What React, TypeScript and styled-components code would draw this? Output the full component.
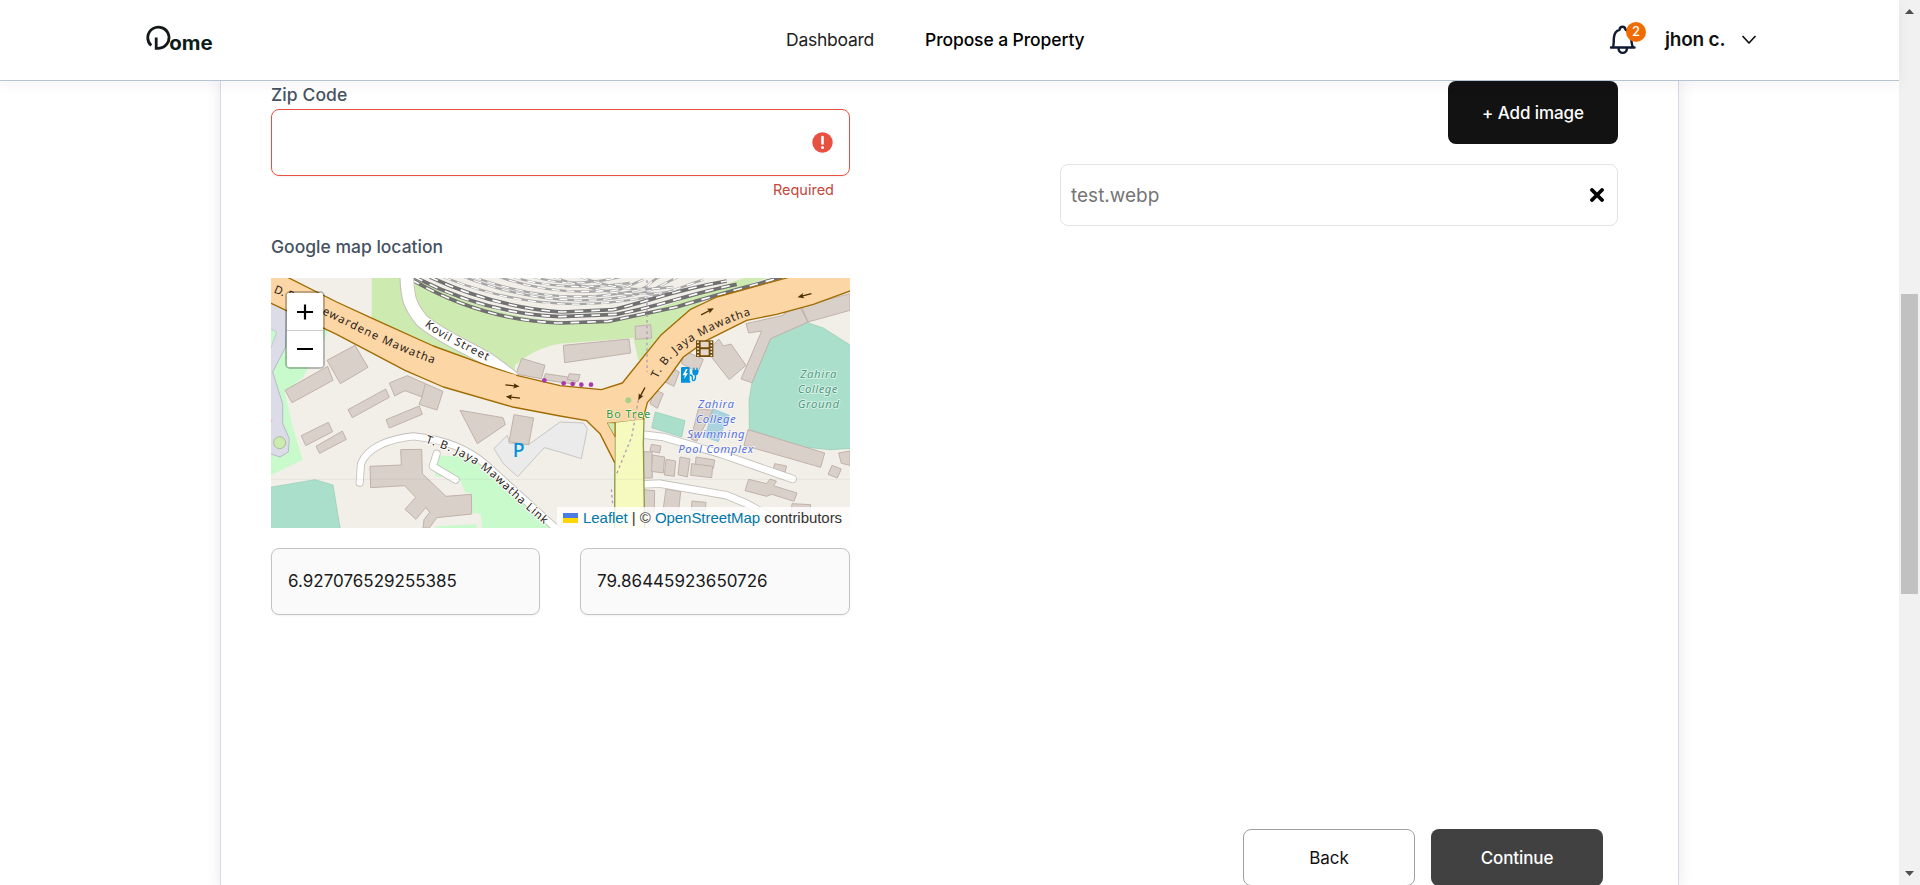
import React from "react";
import styled, { createGlobalStyle } from "styled-components";

const Global = createGlobalStyle`
  * { box-sizing: border-box; }
  html, body { margin: 0; padding: 0; background: #fff; overflow: hidden; }
  body { font-family: Inter, "Liberation Sans", sans-serif; color: #111; }
  button, input { font: inherit; margin: 0; }
`;

const Screen = styled.div`
  display: flex;
  width: 1920px;
  height: 885px;
  overflow: hidden;
`;
const Page = styled.div`
  width: 1899px;
  height: 885px;
  display: flex;
  flex-direction: column;
`;
const Header = styled.header`
  position: relative;
  z-index: 2;
  flex: none;
  height: 81px;
  background: #fff;
  border-bottom: 1px solid #b6c3d2;
  box-shadow: 0 3px 14px rgba(30, 40, 60, 0.06);
  display: grid;
  grid-template-columns: 786px 1fr auto;
  align-items: center;
  padding-right: 143px;
`;
const Logo = styled.svg`
  display: block;
  margin-left: 146px;
  margin-top: -3px;
`;
const Nav = styled.nav`
  display: flex;
  gap: 50px;
`;
const NavLink = styled.a<{ $active?: boolean; $w: number; $ls: number }>`
  width: ${(p) => p.$w}px;
  white-space: nowrap;
  font-size: 17.5px;
  line-height: 24px;
  letter-spacing: ${(p) => p.$ls}px;
  font-weight: ${(p) => (p.$active ? 500 : 400)};
  color: ${(p) => (p.$active ? "#000" : "#222")};
`;
const Account = styled.div`
  display: flex;
  align-items: center;
`;
const BellBox = styled.div`
  position: relative;
  width: 28px;
  height: 30px;
  margin-right: 28px;
`;
const Badge = styled.span`
  position: absolute;
  left: 17px;
  top: -3px;
  width: 20px;
  height: 20px;
  border-radius: 50%;
  background: #f06c00;
  color: #fff;
  font-size: 13px;
  font-weight: 500;
  line-height: 19px;
  text-align: center;
`;
const UserName = styled.span`
  width: 77px;
  font-size: 19px;
  font-weight: 600;
  line-height: 24px;
  letter-spacing: -0.2px;
  white-space: nowrap;
`;
const Card = styled.main`
  flex: 1;
  width: 1459px;
  margin-left: 220px;
  border: solid #d9d9e6;
  border-width: 0 1px;
  box-shadow: 0 0 14px rgba(60, 60, 110, 0.12);
  display: flex;
  flex-direction: column;
  padding: 0 60px 0 50px;
`;
const Columns = styled.div`
  display: flex;
  justify-content: space-between;
  height: 748px;
`;
const FormColumn = styled.section`
  width: 579px;
  display: flex;
  flex-direction: column;
`;
const Label = styled.label<{ $ls: number }>`
  font-size: 17.5px;
  font-weight: 500;
  line-height: 28px;
  letter-spacing: ${(p) => p.$ls}px;
  color: #46525f;
`;
const ZipField = styled.div`
  height: 67px;
  border: 1px solid #e85141;
  border-radius: 8px;
  display: flex;
  align-items: center;
  justify-content: flex-end;
  padding-right: 16px;
  box-shadow: 0 1px 2px rgba(0, 0, 0, 0.05);
`;
const ErrorText = styled.p`
  margin: 3px 16px 32px 0;
  height: 22px;
  text-align: right;
  font-size: 14.5px;
  line-height: 22px;
  color: #c4463b;
`;
const MapFrame = styled.div`
  position: relative;
  height: 250px;
  margin: 17px 0 20px;
  overflow: hidden;
  background: #f2efe9;
`;
const MapDrawing = styled.svg`
  display: block;
  width: 579px;
  height: 250px;
  font-family: "Noto Sans", sans-serif;
`;
const ZoomControl = styled.div`
  position: absolute;
  left: 14px;
  top: 13px;
  width: 40px;
  height: 78px;
  border: 2px solid rgba(0, 0, 0, 0.24);
  border-radius: 5px;
  background-clip: padding-box;
`;
const ZoomButton = styled.button`
  display: flex;
  align-items: center;
  justify-content: center;
  width: 36px;
  height: 37px;
  padding: 0;
  border: 0;
  background: #fff;
  &:first-child { border-bottom: 1px solid #ccc; height: 38px; border-radius: 2px 2px 0 0; }
  &:last-child { border-radius: 0 0 2px 2px; height: 36px; }
`;
const Attribution = styled.div`
  position: absolute;
  right: 0;
  bottom: 0;
  height: 21px;
  width: 293px;
  padding-left: 6px;
  display: flex;
  align-items: center;
  background: rgba(255, 255, 255, 0.82);
  font: 15px/21px "Liberation Sans", Arial, sans-serif;
  letter-spacing: -0.05px;
  color: #333;
  white-space: pre;
  svg { margin-right: 5px; }
  a { color: #0078a8; }
`;
const Coordinates = styled.div`
  display: grid;
  grid-template-columns: 269px 270px;
  gap: 40px;
`;
const CoordinateInput = styled.div`
  height: 67px;
  padding: 0 16px;
  border: 1px solid #c4c4c6;
  border-radius: 8px;
  background: #fafafa;
  box-shadow: 0 1px 2px rgba(0, 0, 0, 0.06);
  font-size: 17px;
  line-height: 65px;
  color: #1a1a1a;
`;
const ImageColumn = styled.section`
  width: 558px;
  display: flex;
  flex-direction: column;
  align-items: flex-end;
`;
const Button = styled.button<{ $kind: "black" | "outline" | "dark" }>`
  width: ${(p) => (p.$kind === "black" ? 170 : 172)}px;
  height: ${(p) => (p.$kind === "black" ? 63 : 57)}px;
  padding: 0;
  border: ${(p) => (p.$kind === "outline" ? "1px solid #a0a0a0" : "0")};
  border-radius: 8px;
  background: ${(p) => ({ black: "#121212", outline: "#fff", dark: "#414141" })[p.$kind]};
  color: ${(p) => (p.$kind === "outline" ? "#111" : "#fff")};
  font-size: 17px;
  font-weight: ${(p) => (p.$kind === "outline" ? 400 : 500)};
  letter-spacing: -0.1px;
`;
const FileRow = styled.div`
  width: 558px;
  height: 62px;
  margin-top: 20px;
  padding: 0 13px 0 10px;
  border: 1px solid #e3e3e8;
  border-radius: 8px;
  display: flex;
  align-items: center;
  justify-content: space-between;
  font-size: 19px;
  color: #757575;
`;
const Footer = styled.footer`
  display: flex;
  justify-content: flex-end;
  gap: 16px;
  padding-right: 15px;
`;
const Scrollbar = styled.aside`
  width: 21px;
  height: 885px;
  background: #f1f1f1;
  display: flex;
  flex-direction: column;
  align-items: center;
  justify-content: space-between;
  padding: 9px 0 9px;
`;
const Thumb = styled.div`
  width: 17px;
  height: 300px;
  margin-top: 2px;
  background: #c1c1c1;
`;

const buildings = [
  "171,250 255,205 294,271 211,320",
  "45,340 173,268 189,310 66,377",
  "358,318 412,296 466,320 519,343 501,399 447,382 456,360 405,341 374,357",
  "234,398 347,336 358,361 247,422",
  "348,428 448,387 457,412 358,453",
  "94,476 175,436 188,464 107,506",
  "138,508 217,462 229,487 149,529",
  "570,400 699,422 706,443 622,500",
  "732,413 791,423 776,503 717,494",
  "392,518 455,517 457,590 528,658 604,652 605,711 500,722 478,753 459,753 462,728 479,706 468,691 438,727 405,697 437,661 404,626 302,632 300,568 394,564",
  "755,244 825,265 814,305 738,291",
  "826,290 880,298 920,305 915,322 820,308",
  "880,205 1077,186 1082,228 884,257",
  "1095,148 1142,143 1145,183 1097,187",
  "898,290 930,293 924,314 892,307",
  "1240,220 1300,247 1284,286 1235,260",
  "1205,272 1228,285 1212,328 1185,315",
  "1155,338 1180,350 1162,394 1140,380",
  "1312,224 1346,186 1360,207 1383,201 1428,265 1378,308",
  "1428,140 1540,115 1548,100 1595,88 1740,50 1740,100 1614,135 1502,185 1446,317 1413,306 1475,162 1436,168",
  "1434,458 1664,528 1652,571 1422,505",
  "1706,528 1740,522 1740,565 1714,559",
  "1686,565 1714,576 1702,603 1674,592",
  "1436,607 1490,620 1500,606 1520,613 1510,626 1581,648 1572,673 1505,652 1490,658 1425,641",
  "1514,560 1550,567 1545,585 1510,576",
  "1285,395 1328,400 1280,493 1263,486",
  "1144,502 1173,507 1169,528 1140,522",
  "1122,524 1146,525 1147,603 1118,603",
  "1148,534 1184,540 1180,588 1144,583",
  "1188,547 1217,552 1213,598 1183,594",
  "1230,540 1260,546 1252,600 1224,593",
  "1278,540 1334,549 1330,574 1276,566",
  "1265,560 1328,568 1325,602 1262,595",
  "1120,638 1154,641 1153,705 1120,705",
  "1188,636 1232,644 1225,710 1178,707",
  "1266,672 1308,676 1306,700 1264,700",
  "1566,680 1622,683 1618,710 1563,708",
];

const rails = [
  "M425 8 C540 75 690 132 870 138 L1015 133 L1220 90 C1330 56 1450 25 1535 0",
  "M434 0 C560 65 700 112 870 119 L1040 112 C1160 90 1260 50 1400 22",
  "M480 0 C600 56 730 95 875 105 L1030 98 C1130 75 1210 40 1370 12",
];
const sidings = [
  "M520 0 C690 68 850 94 1020 76 S1200 40 1300 8",
  "M570 -5 C720 55 870 80 1010 66 S1160 28 1225 0",
  "M610 0 C760 54 890 70 1030 52 S1120 18 1170 0",
  "M675 -5 C790 38 920 54 1050 38 L1120 8",
  "M730 0 C820 30 950 38 1080 18",
  "M790 0 C870 22 950 24 1050 0",
  "M850 0 C1000 55 1120 64 1260 34",
  "M930 0 C1030 35 1100 44 1210 30",
];

function MapArtwork() {
  return (
    <MapDrawing viewBox="3 3 1737 750">
      <rect x="0" y="0" width="1745" height="760" fill="#f2efe9" />
      {/* parks and grass */}
      <path d="M305 0 H1500 L1300 70 1130 240 1105 250 1090 183 870 200 C810 210 770 235 735 265 L735 295 660 280 305 145Z" fill="#cdebb0" />
      <path d="M450 0 H1430 C1260 60 1150 105 1010 133 C850 145 650 115 450 10Z" fill="#f2efe9" />
      <path d="M0 150 H180 L150 210 100 300 45 345 68 450 98 548 0 596Z" fill="#c8facc" />
      <path d="M0 70 L50 95 47 210 8 285 38 380 38 440 58 485 55 525 30 540 0 530Z" fill="#dcdce8" stroke="#b8b8cc" strokeWidth="3" />
      <path d="M0 155 L20 165 0 220Z" fill="#c8facc" stroke="#b8b8cc" strokeWidth="2" />
      <circle cx="29" cy="497" r="18" fill="#cdebb0" stroke="#a6bf91" strokeWidth="3" />
      <path d="M0 425 L9 431 0 439Z" fill="#f7b5b5" />
      <path d="M500 535 L600 540 870 753 H637 L632 710 607 708 604 650 585 645 568 605 495 598Z" fill="#c8facc" />
      <path d="M497 748 L620 742 620 757 H497Z" fill="#c8facc" />
      <path d="M0 631 L135 608 189 624 211 757 H0Z" fill="#aae0cb" stroke="#8fcab2" strokeWidth="2" />
      <path d="M1502 185 L1612 137 1660 153 1745 207 V514 L1680 518 1600 510 1438 458 1437 370 1446 317Z" fill="#aae0cb" stroke="#8fcab2" strokeWidth="2" />
      <path d="M1156 405 L1245 431 1235 480 1145 452Z" fill="#aae0cb" stroke="#8fcab2" strokeWidth="2" />
      <path d="M1328 395 L1378 415 1360 452 1345 494 1305 480Z" fill="#aad3df" stroke="#8cc5d6" strokeWidth="2" />
      <path d="M672 515 L712 475 718 499 776 503 870 435 940 438 952 455 934 545 870 525 823 512 743 599 700 560Z" fill="#ebebeb" stroke="#c9c5c5" strokeWidth="3" />
      {buildings.map((points) => (
        <polygon key={points} points={points} fill="#d9d0c9" stroke="#c1b2ab" strokeWidth="3" />
      ))}
      <path d="M1540 115 L1548 106 1590 91 1615 137 M1595 90 L1614 135 M466 320 L456 360" fill="none" stroke="#c1b2ab" strokeWidth="3" />
      {/* railway */}
      {sidings.map((d) => (
        <g key={d} fill="none">
          <path d={d} stroke="#a6a6a6" strokeWidth="7" />
          <path d={d} stroke="#fff" strokeWidth="3.5" strokeDasharray="24 20" />
        </g>
      ))}
      {rails.map((d) => (
        <g key={d} fill="none">
          <path d={d} stroke="#707070" strokeWidth="11" />
          <path d={d} stroke="#fff" strokeWidth="5" strokeDasharray="26 24" />
        </g>
      ))}
      {/* minor roads */}
      <g fill="none" strokeLinecap="round" strokeLinejoin="round">
        <path id="kovil" d="M410 0 C412 60 418 85 455 130 C520 185 605 215 665 255 L725 300" stroke="#c6c0bb" strokeWidth="44" />
        <path d="M410 -10 C412 60 418 85 455 130 C520 185 605 215 665 255 L725 300" stroke="#fff" strokeWidth="38" />
        <path d="M269 617 L273 560 C292 510 360 485 430 478 C530 488 600 520 650 565 L870 765 M500 530 L488 568 557 608" stroke="#c3beb9" strokeWidth="24" />
        <path d="M269 617 L273 560 C292 510 360 485 430 478 C530 488 600 520 650 565 L870 765 M500 530 L488 568 557 608" stroke="#fff" strokeWidth="19" />
        <path d="M1120 473 L1180 480 1350 530 1568 606 M1118 622 L1170 620 1370 655 1430 680 1540 740" stroke="#c3beb9" strokeWidth="25" />
        <path d="M1120 473 L1180 480 1350 530 1568 606 M1118 622 L1170 620 1370 655 1430 680 1540 740" stroke="#fff" strokeWidth="20" />
      </g>
      {/* main roads */}
      <path d="M1035 435 L1122 425 1120 500 1124 760 H1034Z" fill="#f7fabf" stroke="#8c9a45" strokeWidth="4" />
      <path d="M1010 437 L1035 437 1035 480Z" fill="#cdebb0" stroke="#a06b00" strokeWidth="3" />
      <path d="M35 -8 L200 75 320 130 490 207 650 265 740 295 870 326 994 338 1057 318 1172 175 1260 98 1340 60 1560 0 L1745 0 V40 L1630 82 1520 112 1430 130 1310 190 1240 240 1190 310 1132 377 1119 427 1046 434 1010 437 1034 480 V557 L990 470 950 431 870 417 728 390 520 330 405 280 200 172 0 77 V-8Z" fill="#fcd6a4" />
      <path d="M35 -8 L200 75 320 130 490 207 650 265 740 295 870 326 994 338 1057 318 1172 175 1260 98 1340 60 1560 0 M1745 40 L1630 82 1520 112 1430 130 1310 190 1240 240 1190 310 1132 377 1119 427 M1034 557 L990 470 950 431 870 417 728 390 520 330 405 280 200 172 0 77" fill="none" stroke="#a06b00" strokeWidth="4" strokeLinejoin="round" />
      <path d="M660 277 L720 293 738 297" stroke="#fcd6a4" strokeWidth="7" fill="none" />
      <path d="M1131 10 V285 M1105 370 L1085 480 1038 595 M1024 637 L1028 680" fill="none" stroke="#b59bb5" strokeWidth="4" strokeDasharray="8 9" />
      <path d="M3 607 H1740" stroke="#999" strokeOpacity=".18" strokeWidth="2" />
      <g fill="#ac39ac">
        {[[823, 310], [881, 319], [908, 321], [934, 323], [963, 323]].map(([x, y]) => <circle key={x} cx={x} cy={y} r="7" />)}
      </g>
      {/* one-way arrows */}
      {[[727, 326, 7], [729, 361, 186], [1312, 104, -27], [1604, 55, 165], [1115, 350, 118]].map(([x, y, a]) => (
        <g key={x} transform={`translate(${x} ${y}) rotate(${a})`} fill="#4b2f05">
          <path d="M-21 -2 H6 L3 -8 22 0 3 8 6 2 H-21Z" />
        </g>
      ))}
      {/* street names */}
      <defs>
        <path id="ward" d="M155 110 C270 165 365 218 520 270" />
        <path id="dr" d="M10 46 L80 75" />
        <path id="kovilName" d="M463 145 C520 195 585 213 680 268" />
        <path id="jaya" d="M293 305 C330 220 430 160 590 108" transform="translate(870 0)" />
        <path id="link" d="M466 497 C540 520 610 550 670 605 S770 700 850 765" />
      </defs>
      <g fontSize="34" fill="#2b2419" strokeLinejoin="round" paintOrder="stroke">
        <text stroke="#fcd6a4" strokeWidth="5"><textPath href="#dr">D. R</textPath></text>
        <text stroke="#fcd6a4" strokeWidth="5"><textPath href="#ward" textLength="368">ewardene Mawatha</textPath></text>
        <text stroke="#fff" strokeWidth="6"><textPath href="#kovilName" textLength="216">Kovil Street</textPath></text>
        <text stroke="#fcd6a4" strokeWidth="5"><textPath href="#jaya" textLength="348">T. B. Jaya Mawatha</textPath></text>
        <text stroke="#fff" strokeWidth="6"><textPath href="#link" textLength="438">T. B. Jaya Mawatha Link</textPath></text>
      </g>
      {/* places */}
      <text x="746" y="539" textAnchor="middle" fontSize="58" fontWeight="500" fill="#0092da">P</text>
      <circle cx="1075" cy="370" r="9" fill="#a9cf8b" />
      <text x="1009" y="423" fontSize="32" textLength="132" fill="#2e9a33" stroke="#fff" strokeOpacity=".6" strokeWidth="4" paintOrder="stroke">Bo Tree</text>
      <g fontSize="34" fontStyle="italic" textAnchor="middle" stroke="#fff" strokeOpacity=".65" strokeWidth="5" paintOrder="stroke">
        <g fill="#4c9c80">
          <text x="1645" y="304" textLength="108">Zahira</text>
          <text x="1643" y="348" textLength="119">College</text>
          <text x="1645" y="393" textLength="124">Ground</text>
        </g>
        <g fill="#5b73e0">
          <text x="1338" y="393" textLength="108">Zahira</text>
          <text x="1337" y="438" textLength="120">College</text>
          <text x="1338" y="483" textLength="172">Swimming</text>
          <text x="1337" y="527" textLength="225">Pool Complex</text>
        </g>
      </g>
      {/* cinema */}
      <g transform="translate(1278 190)">
        <rect width="52" height="50" fill="#734a08" />
        <path d="M14 4 H38 V21 H14Z M14 27 H38 V45 H14Z" fill="#e6d8c8" />
        <path d="M6 3 V50 M46 3 V50" stroke="#f2efe9" strokeWidth="5" strokeDasharray="5 5" />
      </g>
      {/* charging point */}
      <g transform="translate(1233 268)" fill="#0092da">
        <path d="M4 2 H22 Q26 2 26 6 V44 H28 V49 H0 V6 Q0 2 4 2Z" />
        <path d="M15 8 L5 27 H12 L9 39 21 21 H14 L20 8Z" fill="#fff" />
        <path d="M27 26 Q34 26 34 34 V40 Q35 45 40 42 Q45 38 43 27" fill="none" stroke="#0092da" strokeWidth="4" />
        <path d="M34 11 H52 V20 Q50 28 43 28 Q36 28 34 20Z M37 4 H41 V12 H37Z M46 4 H50 V12 H46Z" />
      </g>
    </MapDrawing>
  );
}

export default function App() {
  return (
    <>
      <Global />
      <Screen>
        <Page>
          <Header>
            <Logo width="70" height="28" viewBox="0 0 70 28">
              <path d="M5.2 20.5 A10.6 10.6 0 1 1 12.2 23.3 H10.2 V12.5" fill="none" stroke="#131818" strokeWidth="2.8" />
              <text x="23.2" y="24.6" fontSize="19" fontWeight="700" textLength="43.5" lengthAdjust="spacingAndGlyphs" fill="#0c1c18">ome</text>
            </Logo>
            <Nav>
              <NavLink $w={89} $ls={-0.25}>Dashboard</NavLink>
              <NavLink $active $w={160} $ls={-0.1}>Propose a Property</NavLink>
            </Nav>
            <Account>
              <BellBox>
                <svg width="28" height="30" viewBox="0 0 28 30" fill="none" stroke="#101a30" strokeWidth="2.4" strokeLinejoin="round" strokeLinecap="round">
                  <path d="M2 22.5 H25.5 M4 22 C5 20 4.5 16 5 12 C5.5 8 8 5.5 10.5 4.8 C11 0.8 16 0.8 16.6 4.8 C20 6 22 9 22.3 13 C22.5 17 22.5 20 24 22" />
                  <path d="M9.5 23 C9.5 29.5 18 29.5 18 23" />
                </svg>
                <Badge>2</Badge>
              </BellBox>
              <UserName>jhon c.</UserName>
              <svg width="14" height="10" viewBox="0 0 14 10" fill="none" stroke="#111" strokeWidth="1.7" strokeLinecap="round" strokeLinejoin="round">
                <path d="M1 1.5 L7 8 L13 1.5" />
              </svg>
            </Account>
          </Header>
          <Card>
            <Columns>
              <FormColumn>
                <Label $ls={0.1} style={undefined}>Zip Code</Label>
                <ZipField>
                  <svg width="21" height="21" viewBox="0 0 21 21">
                    <circle cx="10.5" cy="10.5" r="10.2" fill="#e85141" />
                    <path d="M10.5 5 V11.5" stroke="#fff" strokeWidth="2.6" strokeLinecap="round" />
                    <circle cx="10.5" cy="15.4" r="1.5" fill="#fff" />
                  </svg>
                </ZipField>
                <ErrorText>Required</ErrorText>
                <Label $ls={0}>Google map location</Label>
                <MapFrame>
                  <MapArtwork />
                  <ZoomControl>
                    <ZoomButton aria-label="Zoom in">
                      <svg width="16" height="16" viewBox="0 0 16 16"><path d="M0 8H16M8 0.5V15.5" stroke="#000" strokeWidth="2.2" /></svg>
                    </ZoomButton>
                    <ZoomButton aria-label="Zoom out">
                      <svg width="16" height="16" viewBox="0 0 16 16"><path d="M0 8H16" stroke="#000" strokeWidth="2" /></svg>
                    </ZoomButton>
                  </ZoomControl>
                  <Attribution>
                    <svg width="15" height="10" viewBox="0 0 15 10"><path fill="#4c7be1" d="M0 0h15v5H0z" /><path fill="#ffd500" d="M0 5h15v5H0z" /></svg>
                    <a>Leaflet</a> | © <a>OpenStreetMap</a> contributors
                  </Attribution>
                </MapFrame>
                <Coordinates>
                  <CoordinateInput>6.927076529255385</CoordinateInput>
                  <CoordinateInput>79.86445923650726</CoordinateInput>
                </Coordinates>
              </FormColumn>
              <ImageColumn>
                <Button $kind="black">+ Add image</Button>
                <FileRow>
                  <span>test.webp</span>
                  <svg width="14" height="14" viewBox="0 0 14 14"><path d="M2 2L12 12M12 2L2 12" stroke="#000" strokeWidth="3.8" strokeLinecap="round" /></svg>
                </FileRow>
              </ImageColumn>
            </Columns>
            <Footer>
              <Button $kind="outline">Back</Button>
              <Button $kind="dark">Continue</Button>
            </Footer>
          </Card>
        </Page>
        <Scrollbar>
          <svg width="9" height="5" viewBox="0 0 9 5"><path d="M0 5L4.5 0L9 5Z" fill="#505050" /></svg>
          <Thumb />
          <svg width="9" height="5" viewBox="0 0 9 5"><path d="M0 0L4.5 5L9 0Z" fill="#505050" /></svg>
        </Scrollbar>
      </Screen>
    </>
  );
}
